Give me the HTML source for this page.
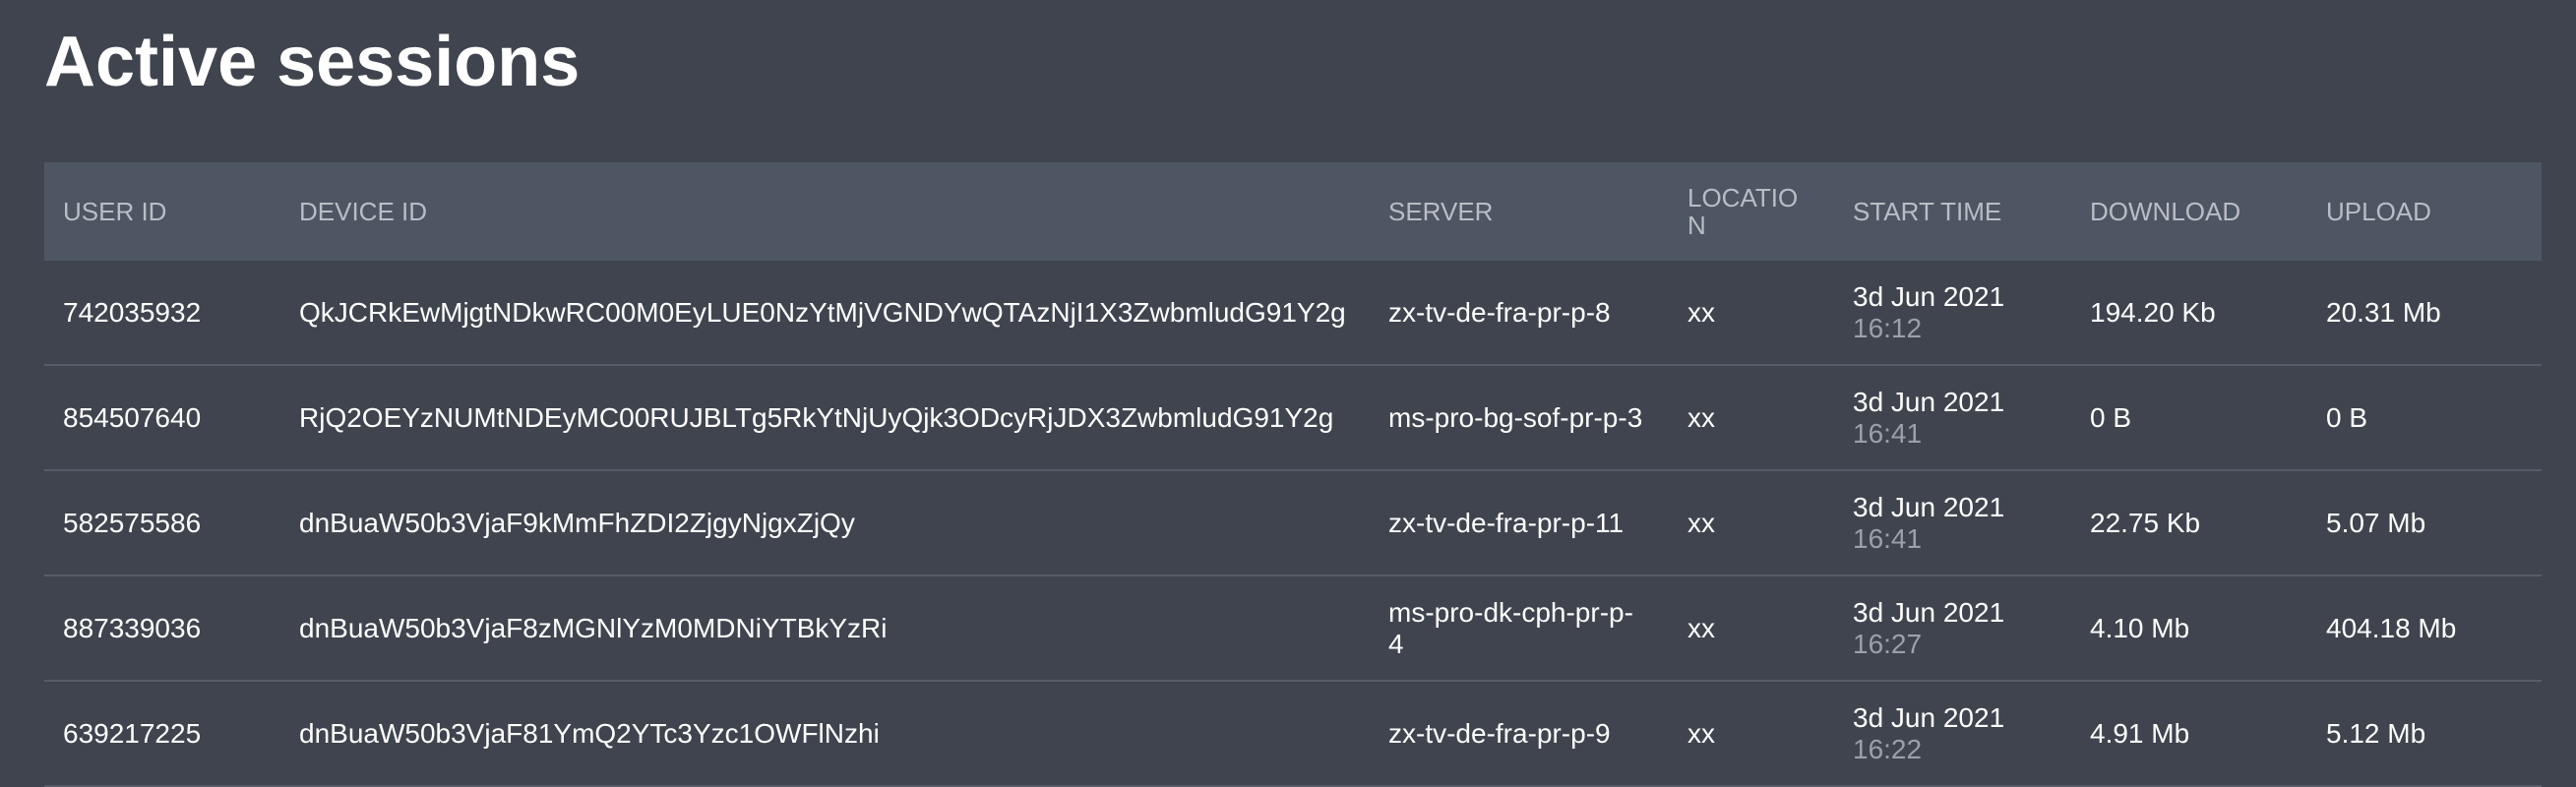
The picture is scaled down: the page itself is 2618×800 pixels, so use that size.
<!DOCTYPE html>
<html><head><meta charset="utf-8"><style>
html,body{margin:0;padding:0;background:#3f444e;width:2618px;height:798px;overflow:hidden;font-family:"Liberation Sans",Arial,sans-serif;color:#fff}
h1{position:absolute;left:45px;top:22px;margin:0;font-size:72px;font-weight:bold;letter-spacing:0px}
table{position:absolute;left:45px;top:165px;width:2538px;border-collapse:collapse;table-layout:fixed}
th{background:#4f5663;color:#b9bdc5;font-weight:normal;font-size:26px;text-align:left;height:100px;padding:0 0 0 19px;line-height:28px}
td{height:105px;border-bottom:2px solid #575d68;font-size:28px;padding:0 0 0 19px;line-height:32px;vertical-align:middle}
.t{color:#9ca0a8}
</style></head><body>
<h1>Active sessions</h1>
<table>
<colgroup><col style="width:240px"><col style="width:1107px"><col style="width:304px"><col style="width:168px"><col style="width:241px"><col style="width:240px"><col></colgroup>
<tr><th>USER ID</th><th>DEVICE ID</th><th>SERVER</th><th>LOCATIO<br>N</th><th>START TIME</th><th>DOWNLOAD</th><th>UPLOAD</th></tr>
<tr><td>742035932</td><td>QkJCRkEwMjgtNDkwRC00M0EyLUE0NzYtMjVGNDYwQTAzNjI1X3ZwbmludG91Y2g</td><td>zx-tv-de-fra-pr-p-8</td><td>xx</td><td>3d Jun 2021<br><span class="t">16:12</span></td><td>194.20 Kb</td><td>20.31 Mb</td></tr>
<tr><td>854507640</td><td>RjQ2OEYzNUMtNDEyMC00RUJBLTg5RkYtNjUyQjk3ODcyRjJDX3ZwbmludG91Y2g</td><td>ms-pro-bg-sof-pr-p-3</td><td>xx</td><td>3d Jun 2021<br><span class="t">16:41</span></td><td>0 B</td><td>0 B</td></tr>
<tr><td>582575586</td><td>dnBuaW50b3VjaF9kMmFhZDI2ZjgyNjgxZjQy</td><td>zx-tv-de-fra-pr-p-11</td><td>xx</td><td>3d Jun 2021<br><span class="t">16:41</span></td><td>22.75 Kb</td><td>5.07 Mb</td></tr>
<tr><td>887339036</td><td>dnBuaW50b3VjaF8zMGNlYzM0MDNiYTBkYzRi</td><td>ms-pro-dk-cph-pr-p-<br>4</td><td>xx</td><td>3d Jun 2021<br><span class="t">16:27</span></td><td>4.10 Mb</td><td>404.18 Mb</td></tr>
<tr><td>639217225</td><td>dnBuaW50b3VjaF81YmQ2YTc3Yzc1OWFlNzhi</td><td>zx-tv-de-fra-pr-p-9</td><td>xx</td><td>3d Jun 2021<br><span class="t">16:22</span></td><td>4.91 Mb</td><td>5.12 Mb</td></tr>
</table>
</body></html>
